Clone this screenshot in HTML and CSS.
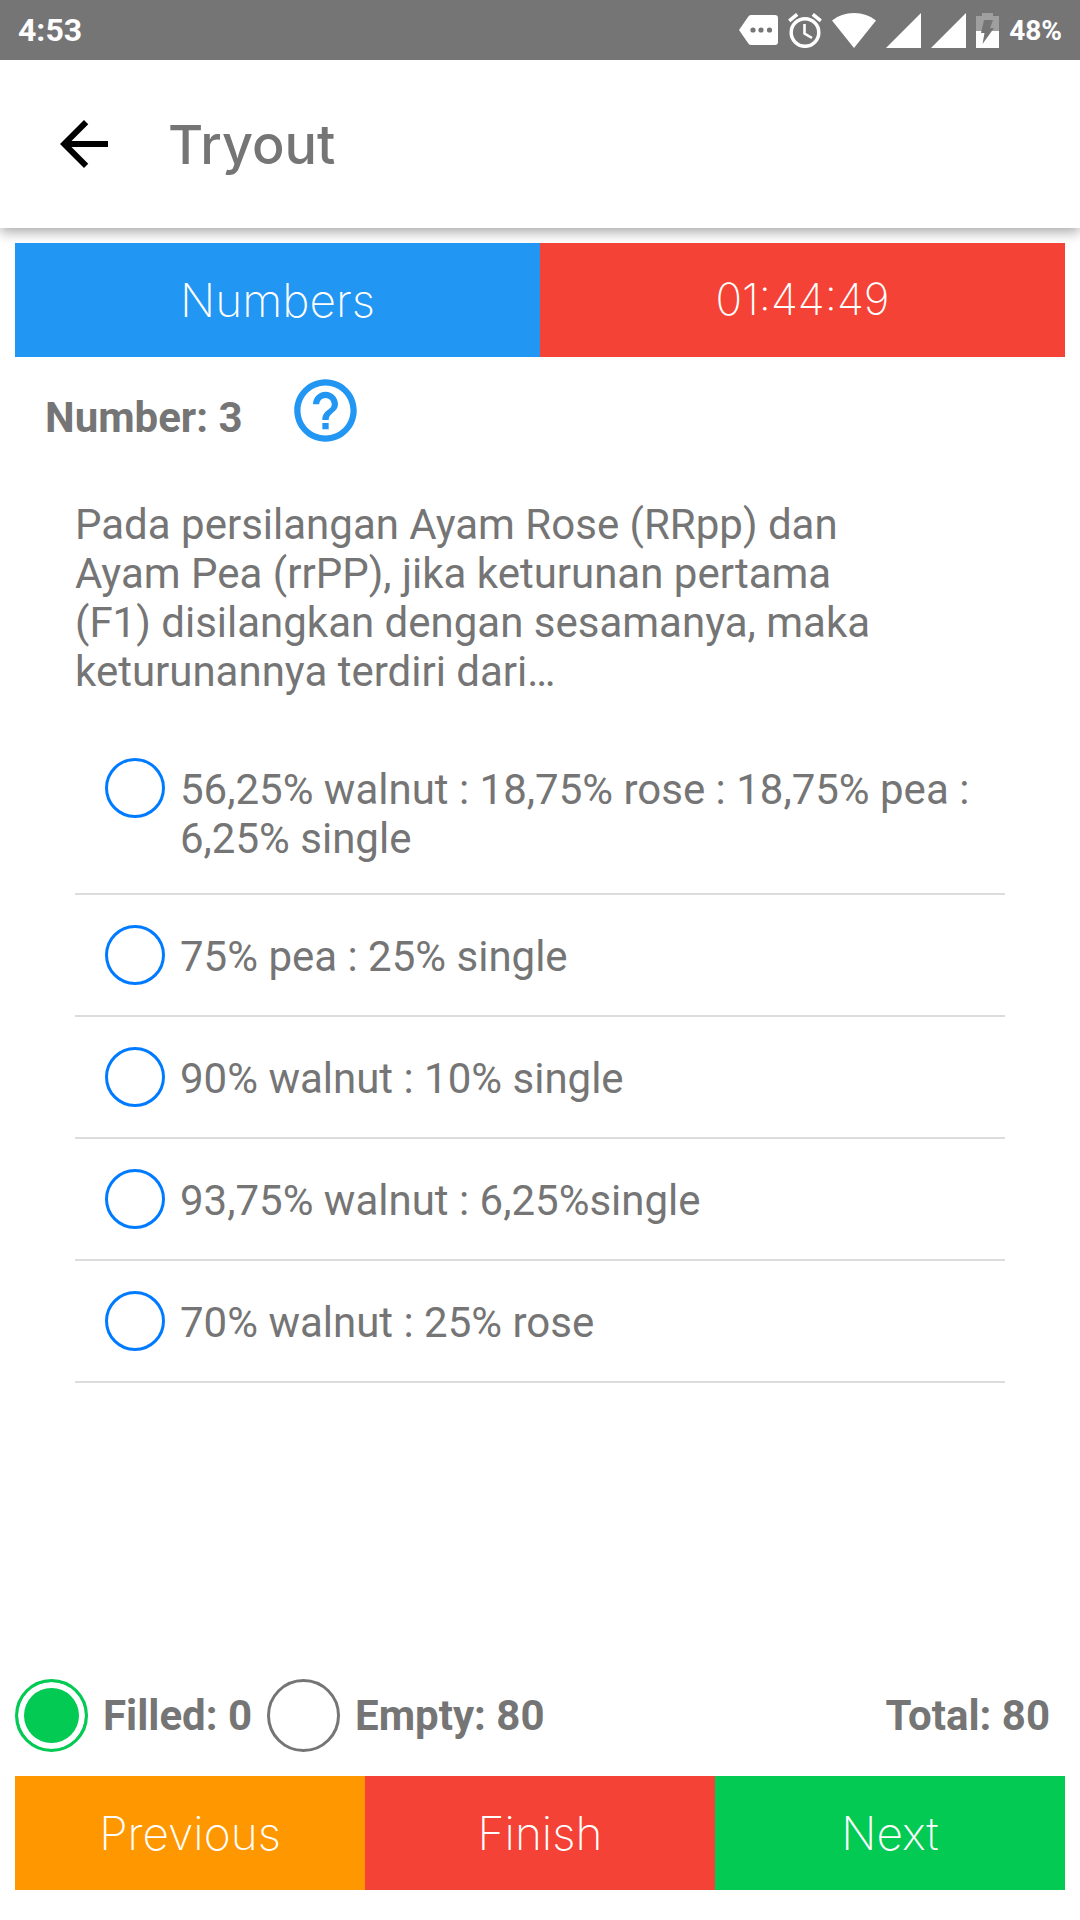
FILE: index.html
```
<!DOCTYPE html>
<html lang="id">

<head>
    <meta charset="UTF-8">
    <meta name="viewport" content="width=device-width, initial-scale=1.0">
    <title>Tryout</title>
    <link rel="stylesheet" href="styles.css">
</head>

<body>
    <div class="status-bar">
        <span class="time">4:53</span>
        <div class="status-icons">
            <svg class="icon-more" viewBox="0 0 39 30" width="39" height="30">
                <path fill="#fff" d="M12 0h24a3 3 0 0 1 3 3v24a3 3 0 0 1-3 3H12q-2 0-3-2L0 15 9 2q1-2 3-2z" />
                <g fill="#757575">
                    <circle cx="14" cy="15" r="2.6" />
                    <circle cx="22" cy="15" r="2.6" />
                    <circle cx="30.5" cy="15" r="2.6" />
                </g>
            </svg>
            <svg class="icon-alarm" viewBox="0 0 34 35" width="34" height="35">
                <g fill="none" stroke="#fff">
                    <circle cx="17" cy="19.5" r="13.8" stroke-width="3.5" />
                    <path stroke-width="2.6" d="M16.5 11v9.500l7.5 4.500" />
                    <path stroke-width="3.6" d="M1.2 7.800l8-6.500M32.800 7.800l-8-6.500" />
                </g>
            </svg>
            <svg class="icon-wifi" viewBox="0 0 44 35" width="44" height="35">
                <path fill="#fff" d="M0 7.500Q9 0 22 0t22 7.500L22 35z" />
            </svg>
            <svg class="icon-signal" viewBox="0 0 35 35" width="35" height="35">
                <path fill="#fff" d="M35 0v35H0z" />
            </svg>
            <svg class="icon-signal" viewBox="0 0 35 35" width="35" height="35">
                <path fill="#fff" d="M35 0v35H0z" />
            </svg>
            <svg class="icon-battery" viewBox="0 0 23 35" width="23" height="35">
                <path fill="#9f9f9f" d="M6 0h11v3h6v15H0V3h6z" />
                <path fill="#fff" d="M0 18h23v17H0z" />
                <path fill="#757575" d="M8 7h9l-3 8h4L6.500 31l2-11H5z" />
            </svg>
            <span class="percent">48%</span>
        </div>
    </div>

    <header class="header">
        <button class="back" type="button" aria-label="Back">
            <svg viewBox="0 0 24 24" width="72" height="72">
                <path d="M20 11H7.830l5.590-5.590L12 4l-8 8 8 8 1.410-1.410L7.830 13H20v-2z" />
            </svg>
        </button>
        <h1>Tryout</h1>
    </header>

    <div class="bar top-bar">
        <button class="btn blue" type="button">Numbers</button>
        <div class="btn red timer">01:44:49</div>
    </div>

    <main class="content">
        <div class="number">
            <h2>Number: 3</h2>
            <button class="help" type="button" aria-label="Help">
                <svg viewBox="0 0 24 24" width="75" height="75">
                    <path fill="#2196f3" d="M11 18h2v-2h-2v2zm1-16C6.480 2 2 6.480 2 12s4.480 10 10 10 10-4.480 10-10S17.520 2 12 2zm0 18c-4.410 0-8-3.590-8-8s3.590-8 8-8 8 3.590 8 8-3.590 8-8 8zm0-14c-2.210 0-4 1.790-4 4h2c0-1.100.9-2 2-2s2 .9 2 2c0 2-3 1.750-3 5h2c0-2.250 3-2.500 3-5 0-2.210-1.790-4-4-4z" />
                </svg>
            </button>
        </div>

        <p class="question">Pada persilangan Ayam Rose (RRpp) dan Ayam Pea (rrPP), jika keturunan pertama (F1) disilangkan dengan sesamanya, maka keturunannya terdiri dari…</p>

        <ul class="options">
            <li>
                <input type="radio" name="answer" id="a1">
                <label for="a1">56,25% walnut : 18,75% rose : 18,75% pea : 6,25% single</label>
            </li>
            <li>
                <input type="radio" name="answer" id="a2">
                <label for="a2">75% pea : 25% single</label>
            </li>
            <li>
                <input type="radio" name="answer" id="a3">
                <label for="a3">90% walnut : 10% single</label>
            </li>
            <li>
                <input type="radio" name="answer" id="a4">
                <label for="a4">93,75% walnut : 6,25%single</label>
            </li>
            <li>
                <input type="radio" name="answer" id="a5">
                <label for="a5">70% walnut : 25% rose</label>
            </li>
        </ul>
    </main>

    <footer class="footer">
        <div class="summary">
            <span class="dot filled"></span>
            <span>Filled: 0</span>
            <span class="dot"></span>
            <span>Empty: 80</span>
            <span class="total">Total: 80</span>
        </div>
        <div class="bar">
            <button class="btn orange" type="button">Previous</button>
            <button class="btn red" type="button">Finish</button>
            <button class="btn green" type="button">Next</button>
        </div>
    </footer>
</body>

</html>
```
FILE: styles.css
```
* {
    margin: 0;
    padding: 0;
    box-sizing: border-box;
}

body {
    display: flex;
    flex-direction: column;
    min-height: 100vh;
    background: #fff;
    color: #757575;
    font-family: Roboto, sans-serif;
    font-size: 42px;
    line-height: 49px;
}

button {
    border: none;
    background: none;
    cursor: pointer;
}

svg {
    display: block;
}

/* status bar, stays above the header shadow */
.status-bar {
    position: relative;
    display: flex;
    justify-content: space-between;
    align-items: center;
    height: 60px;
    padding: 0 18px;
    background: #757575;
    color: #fff;
    font-weight: bold;
}

.time {
    font-size: 32px;
}

.status-icons {
    display: flex;
    align-items: center;
    gap: 10px;
}

.percent {
    font-size: 28px;
}

/* header */
.header {
    display: flex;
    align-items: center;
    gap: 48px;
    height: 168px;
    padding: 0 48px;
    background: #fff;
    box-shadow: 0 4px 12px rgba(0, 0, 0, 0.35);
}

.header h1 {
    font-family: Inter, sans-serif;
    font-size: 54px;
    font-weight: 500;
}

/* colored bars */
.bar {
    display: flex;
    margin: 0 15px;
}

.top-bar {
    position: relative;
    margin-top: 15px;
}

.btn {
    flex: 1;
    height: 114px;
    color: #fff;
    font-family: Inter, sans-serif;
    font-size: 46px;
    font-weight: 200;
    line-height: 112px;
    text-align: center;
}

.timer {
    font-size: 44px;
}

.blue {
    background: #2196f3;
}

.red {
    background: #f44336;
}

.orange {
    background: #ff9800;
}

.green {
    background: #02ca53;
}

/* question */
.content {
    flex: 1;
}

.number {
    display: flex;
    align-items: center;
    gap: 45px;
    padding: 16px 45px 0;
}

.number h2 {
    padding-top: 14px;
    font-size: 42px;
    font-weight: bold;
}

.question {
    padding: 52px 180px 0 75px;
}

.options {
    margin: 32px 75px 0;
    list-style: none;
}

.options li {
    display: flex;
    align-items: flex-start;
    gap: 15px;
    padding: 30px;
    border-bottom: 2px solid #dcdcdc;
}

.options input {
    flex: none;
    width: 60px;
    height: 60px;
    border: 3px solid #007bff;
    border-radius: 50%;
    appearance: none;
}

.options input:checked {
    background: #007bff;
    box-shadow: inset 0 0 0 6px #fff;
}

.options label {
    padding-top: 7px;
}

/* footer */
.footer {
    padding-bottom: 30px;
}

.summary {
    display: flex;
    align-items: center;
    gap: 15px;
    padding: 0 30px 24px 15px;
    font-weight: bold;
}

.dot {
    width: 73px;
    height: 73px;
    border: 3px solid #757575;
    border-radius: 50%;
}

.dot.filled {
    border-color: #02ca53;
    background: #02ca53;
    box-shadow: inset 0 0 0 6px #fff;
}

.total {
    margin-left: auto;
}
```
